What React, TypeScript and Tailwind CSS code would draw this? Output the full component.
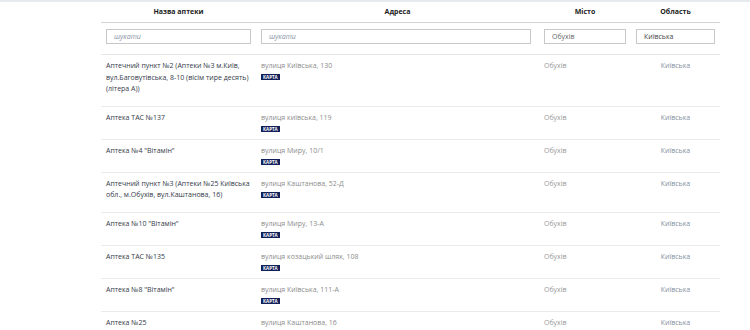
const rows = [
	{
		name: "Аптечний пункт №2 (Аптеки №3 м.Київ, вул.Баговутівська, 8-10 (вісім тире десять) (літера А))",
		address: "вулиця Київська, 130",
	},
	{ name: "Аптека ТАС №137", address: "вулиця київська, 119" },
	{ name: "Аптека №4 \"Вітамін\"", address: "вулиця Миру, 10/1" },
	{
		name: "Аптечний пункт №3 (Аптеки №25 Київська обл., м.Обухів, вул.Каштанова, 16)",
		address: "вулиця Каштанова, 52-Д",
	},
	{ name: "Аптека №10 \"Вітамін\"", address: "вулиця Миру, 13-А" },
	{ name: "Аптека ТАС №135", address: "вулиця козацький шлях, 108" },
	{ name: "Аптека №8 \"Вітамін\"", address: "вулиця Київська, 111-А" },
	{ name: "Аптека №25", address: "вулиця Каштанова, 16" },
];

const grid = "grid grid-cols-[155px_283px_92px_89px]";

export default function App() {
	return (
		<div
			className="w-[750px] h-[330px] overflow-hidden bg-white border-t-2 border-[#e6e9ee]"
			style={{ fontFamily: '"Open Sans", "DejaVu Sans", sans-serif' }}
		>
			<div className="ml-[101px] w-[619px]">
				{/* Header */}
				<div className={`${grid} h-[21px] items-center border-b border-[#d4d4d4] text-[7px] font-bold text-[#1c1c1c]`}>
					<div className="text-center pt-[1px]">Назва аптеки</div>
					<div className="text-center pt-[1px]">Адреса</div>
					<div className="text-center pt-[1px]">Місто</div>
					<div className="text-center pt-[1px]">Область</div>
				</div>

				{/* Filters */}
				<div className={`${grid} pt-[6px] pb-[10px] border-b border-[#e6e6e6] leading-none`}>
					<div className="px-[5px]">
						<input
							placeholder="шукати"
							className="block w-full h-[15px] border border-[#c8c8c8] px-[7px] text-[7px] italic placeholder:text-[#8a93a6] outline-none"
						/>
					</div>
					<div className="pl-[5px] pr-[8px]">
						<input
							placeholder="шукати"
							className="block w-full h-[15px] border border-[#c8c8c8] px-[7px] text-[7px] italic placeholder:text-[#8a93a6] outline-none"
						/>
					</div>
					<div className="pl-[5px] pr-[5px]">
						<input
							defaultValue="Обухів"
							className="block w-full h-[15px] border border-[#c8c8c8] px-[7px] text-[7px] text-[#666] outline-none"
						/>
					</div>
					<div className="px-[5px]">
						<input
							defaultValue="Київська"
							className="block w-full h-[15px] border border-[#c8c8c8] px-[7px] text-[7px] text-[#444] outline-none"
						/>
					</div>
				</div>

				{/* Rows */}
				{rows.map((r, i) => (
					<div key={i} className={`${grid} border-b border-[#ebebeb] text-[7px] leading-[11.5px]`}>
						<div className="pl-[5px] pr-[6px] pt-[5px] pb-[11px] text-[#333a48]">{r.name}</div>
						<div className="pl-[5px] pt-[5px] pb-[4px] text-[#8c8c8c]">
							<div>{r.address}</div>
							<div className="h-[11.5px] flex items-center">
								<span className="bg-[#13215a] text-white font-bold text-[4.5px] leading-[6px] px-[2px]">
									КАРТА
								</span>
							</div>
						</div>
						<div className="pl-[5px] pt-[5px] text-[#999999]">Обухів</div>
						<div className="pt-[5px] text-center text-[#8390a0]">Київська</div>
					</div>
				))}
			</div>
		</div>
	);
}
